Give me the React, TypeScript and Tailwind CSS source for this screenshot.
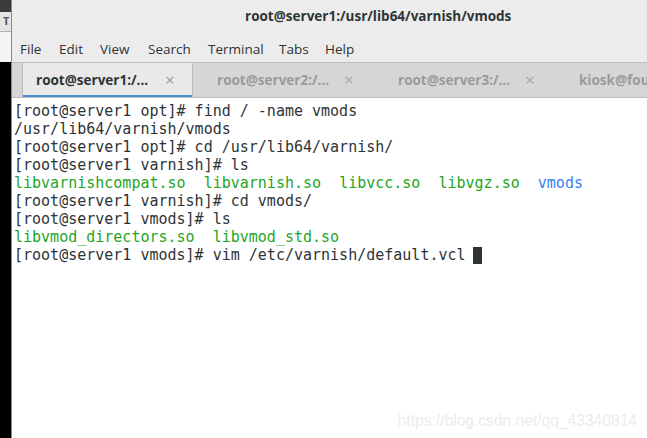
import React from "react";

const mono = { fontFamily: '"DejaVu Sans Mono", monospace' };

function Line({ children }: { children: React.ReactNode }) {
  return <div className="h-[18px] overflow-hidden whitespace-pre leading-[18px]">{children}</div>;
}

function Tab({ label, active }: { label: string; active?: boolean }) {
  return (
    <div
      className={
        active
          ? "relative flex h-full w-[171px] shrink-0 items-center border-x border-[#bcbcbc] bg-[#e9e9e9] pl-[13px]"
          : "relative flex h-full w-[181px] shrink-0 items-center pl-[24px]"
      }
    >
      <span
        className={
          active
            ? "whitespace-nowrap text-[13.5px] font-bold text-[#2e3436]"
            : "whitespace-nowrap text-[13.5px] font-bold text-[#9a9a9a]"
        }
      >
        {label}
      </span>
      <div
        className={
          active
            ? "absolute left-[142px] top-0 flex h-full items-center text-[17px] text-[#9a9a9a]"
            : "absolute left-[151px] top-0 flex h-full items-center text-[17px] text-[#a6a6a6]"
        }
      >
        ×
      </div>
      {active && <div className="absolute bottom-[-1px] left-0 right-0 h-[3px] bg-[#4a90d9]" />}
    </div>
  );
}

export default function App() {
  return (
    <div className="flex h-[438px] w-[647px] overflow-hidden bg-white" style={{ fontFamily: '"Open Sans", "Noto Sans", sans-serif' }}>
      {/* left strip */}
      <div className="flex w-[12px] shrink-0 flex-col border-r border-[#8a8a8a]">
        <div className="h-[12px] bg-[#3b3b3b]" />
        <div className="flex h-[20px] items-center border-b border-[#b0b0b0] bg-[#e4e4e4] pl-[3px] text-[11px] font-bold text-[#555]">T</div>
        <div className="h-[30px] bg-[#f4f4f4]" />
        <div className="flex-1 bg-black" />
      </div>
      {/* window */}
      <div className="flex min-w-0 flex-1 flex-col">
        <div className="flex h-[33px] items-center bg-[#ececec]">
          <div className="w-full pl-[233px] text-[13.5px] font-bold text-[#2e3436]">root@server1:/usr/lib64/varnish/vmods</div>
        </div>
        <div className="flex h-[29px] items-center bg-[#ececec] pl-[8px] pt-[3px] text-[13.5px] text-[#2e3436]">
          <span className="w-[39px]">File</span>
          <span className="w-[41px]">Edit</span>
          <span className="w-[48px]">View</span>
          <span className="w-[60px]">Search</span>
          <span className="w-[71px]">Terminal</span>
          <span className="w-[46px]">Tabs</span>
          <span>Help</span>
        </div>
        <div className="flex h-[36px] overflow-hidden border-y border-[#bdbdbd] bg-[#d6d6d6] pl-[10px]">
          <Tab label="root@server1:/..." active />
          <Tab label="root@server2:/..." />
          <Tab label="root@server3:/..." />
          <Tab label="kiosk@foundation" />
        </div>
        <div className="relative flex-1 pl-[2px] pt-[4px] text-[15px] text-[#2e3436]" style={mono}>
          <Line>[root@server1 opt]# find / -name vmods</Line>
          <Line>/usr/lib64/varnish/vmods</Line>
          <Line>[root@server1 opt]# cd /usr/lib64/varnish/</Line>
          <Line>[root@server1 varnish]# ls</Line>
          <Line>
            <span className="text-[#1fa51f]">libvarnishcompat.so</span>{"  "}
            <span className="text-[#1fa51f]">libvarnish.so</span>{"  "}
            <span className="text-[#1fa51f]">libvcc.so</span>{"  "}
            <span className="text-[#1fa51f]">libvgz.so</span>{"  "}
            <span className="text-[#3a7ff0]">vmods</span>
          </Line>
          <Line>[root@server1 varnish]# cd vmods/</Line>
          <Line>[root@server1 vmods]# ls</Line>
          <Line>
            <span className="text-[#1fa51f]">libvmod_directors.so</span>{"  "}
            <span className="text-[#1fa51f]">libvmod_std.so</span>
          </Line>
          <div className="relative h-[18px] whitespace-pre leading-[18px]">
            {"[root@server1 vmods]# vim /etc/varnish/default.vcl "}
            <div className="absolute left-[459px] top-[1px] h-[17px] w-[9px] bg-[#2e3436]" />
          </div>
          <div
            className="absolute right-[10px] top-[311px] text-[15.6px] text-[#ececec]"
            style={{ fontFamily: '"Liberation Sans", Arial, sans-serif' }}
          >
            https://blog.csdn.net/qq_43340814
          </div>
        </div>
      </div>
    </div>
  );
}
